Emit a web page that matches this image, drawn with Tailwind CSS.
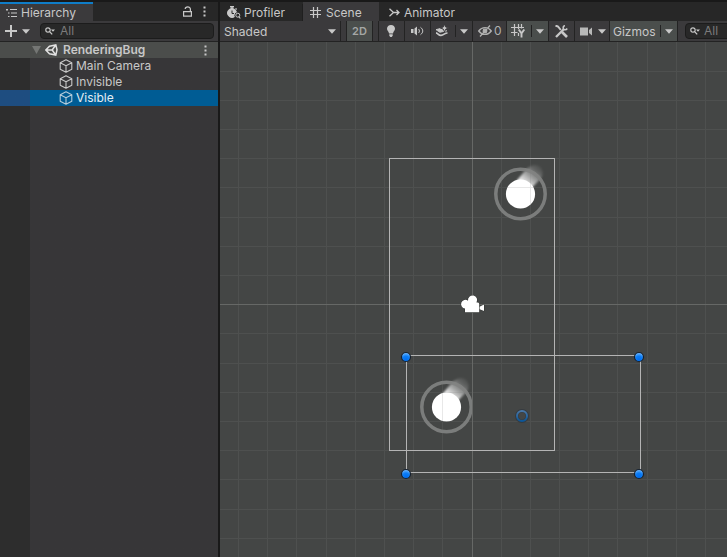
<!DOCTYPE html>
<html lang="en">
<head>
<meta charset="utf-8">
<title>RenderingBug</title>
<script src="https://cdn.jsdelivr.net/npm/@tailwindcss/browser@4"></script>
</head>
<body class="flex h-screen overflow-hidden border-t-2 border-[#191919] bg-[#191919] font-['Inter','Liberation_Sans',sans-serif] text-xs text-[#c8c8c8]">
<svg class="hidden">
  <symbol id="cube" viewBox="0 0 14 14"><path d="M7 .8 12.8 3.8V10.2L7 13.3 1.2 10.2V3.8ZM1.2 3.8 7 6.8 12.8 3.8M7 6.8V13.3" fill="none" stroke="currentColor" stroke-width="1.1" stroke-linejoin="round"/></symbol>
  <symbol id="down" viewBox="0 0 8 5"><path d="M0 .3H8L4 4.8Z" fill="currentColor"/></symbol>
  <symbol id="dots" viewBox="0 0 3 11"><path d="M.5 .5h2v2h-2zM.5 4.5h2v2h-2zM.5 8.5h2v2h-2z" fill="currentColor"/></symbol>
  <symbol id="search" viewBox="0 0 10 8"><circle cx="3" cy="3" r="2.2" fill="none" stroke="currentColor" stroke-width="1.2"/><path d="M4.6 4.6 7.2 7.4" stroke="currentColor" stroke-width="1.3"/><path d="M6 2.6H10L8 4.8Z" fill="currentColor"/></symbol>
</svg>

<aside class="flex w-[218px] shrink-0 flex-col bg-[#373638]">
  <div class="flex h-[19px] shrink-0 bg-[#272727]">
    <button class="flex h-full w-[93px] items-center gap-1 border-t-2 border-[#0f7dc8] bg-[#3b3a3c] pl-1.5">
      <svg class="h-[10px] w-[11px]" viewBox="0 0 11 10" stroke="currentColor" fill="none"><path d="M0 1.5H2M4 1.5H11M2 5H3.500M5 5H11M2 8.500H3.500M5 8.500H11M1 1V3"/></svg>
      Hierarchy
    </button>
    <div class="ml-auto flex items-center gap-[11px] pr-[12px]">
      <button aria-label="Lock"><svg class="block h-[11px] w-[9px]" viewBox="0 0 9 11" fill="none" stroke="currentColor" stroke-width="1.2"><path d="M.6 5.600H8.400V10.200H.6ZM7.400 5.600V3C7.400.200 2.200.200 2.200 3"/></svg></button>
      <button aria-label="Hierarchy menu"><svg class="block h-[11px] w-[3px]"><use href="#dots"/></svg></button>
    </div>
  </div>
  <div class="flex h-[21px] shrink-0 items-center border-b border-[#232323] bg-[#3b3a3c] pr-1 pl-[5px]">
    <button aria-label="Create" class="flex items-center gap-[5px]">
      <svg class="h-3 w-3" viewBox="0 0 12 12" stroke="currentColor" stroke-width="2"><path d="M6 0V12M0 6H12"/></svg>
      <svg class="h-[5px] w-2"><use href="#down"/></svg>
    </button>
    <label class="ml-[10px] flex h-4 min-w-0 flex-1 items-center gap-[5px] rounded border border-[#1c1c1c] bg-[#282828] pl-1">
      <svg class="h-2 w-2.5 shrink-0"><use href="#search"/></svg>
      <input aria-label="Search hierarchy" placeholder="All" class="w-full min-w-0 bg-transparent placeholder:text-[#7b7b7b] outline-none">
    </label>
  </div>
  <div class="flex h-4 shrink-0 items-center bg-[#4b4d4b] pr-[11px] pl-8 font-semibold">
    <svg class="h-2 w-[9px] text-[#747674]" viewBox="0 0 9 8"><path d="M0 0H9L4.500 8Z" fill="currentColor"/></svg>
    <svg class="mr-[5px] ml-1 h-3 w-[13px]" viewBox="0 0 13 12" fill="none" stroke="#e2e2e2" stroke-width="1.500"><path d="M4.500 2.200 10.800 .9 12 5.800 10.800 11.100 4.500 9.800 .8 6ZM7.200 6H.8M7.200 6 10.800 .9M7.200 6 10.800 11.100"/></svg>
    RenderingBug
    <button aria-label="Scene menu" class="ml-auto"><svg class="block h-[11px] w-[3px]"><use href="#dots"/></svg></button>
  </div>
  <div class="flex flex-1 flex-col bg-linear-to-r from-[#2d2d2d] from-[30px] to-[#373638] to-[30px]">
    <a href="#" class="flex h-4 items-center gap-[3px] pl-[59px]"><svg class="h-3.5 w-3.5"><use href="#cube"/></svg>Main Camera</a>
    <a href="#" class="flex h-4 items-center gap-[3px] pl-[59px]"><svg class="h-3.5 w-3.5"><use href="#cube"/></svg>Invisible</a>
    <a href="#" aria-current="true" class="flex h-4 items-center gap-[3px] bg-linear-to-r from-[#1e4d80] from-[30px] to-[#005c94] to-[30px] pl-[59px] text-[#e4eef4]"><svg class="h-3.5 w-3.5 text-[#b4ccda]"><use href="#cube"/></svg>Visible</a>
  </div>
</aside>

<main class="ml-0.5 flex min-w-0 flex-1 flex-col">
  <div class="flex h-[19px] shrink-0 bg-[#272727] pt-0.5">
    <button class="flex w-[83px] items-center gap-[3px] border-r border-[#1f1f1f] pl-[7px]">
      <svg class="h-[13px] w-[14px]" viewBox="0 0 14 13" fill="none" stroke="currentColor"><circle cx="5" cy="7" r="4.500" fill="currentColor"/><path d="M3 .7H7M5 1V3M8.500 2.500 9.600 3.500" stroke-width="1.500"/><path d="M5 4.500V7.500H7" stroke="#272727"/><circle cx="10.800" cy="9.500" r="2.900" fill="#272727" stroke="#272727"/><circle cx="10.800" cy="9.200" r="2"/><path d="M11.800 10.500 13.300 12.500" stroke-width="1.200"/></svg>
      Profiler
    </button>
    <button class="-mt-0.5 flex w-[76px] items-center gap-[5px] bg-[#3b3a3c] pt-0.5 pl-[7px]">
      <svg class="h-[11px] w-[11px]" viewBox="0 0 11 11" stroke="currentColor" stroke-width="1.200"><path d="M3.500 0V11M7.500 0V11M0 3.500H11M0 7.500H11"/></svg>
      Scene
    </button>
    <button class="flex items-center gap-1 pl-[10px]">
      <svg class="h-[10px] w-[11px]" viewBox="0 0 11 10" fill="none" stroke="currentColor" stroke-width="1.300"><path d="M.5 .8 4.500 4.500 .5 8.200M3.500 4.500H10M7.500 2 10 4.500 7.500 7"/></svg>
      Animator
    </button>
  </div>
  <div class="flex h-[21px] shrink-0 overflow-hidden border-b border-[#232323] bg-[#3b3a3c]">
    <label class="relative flex w-[121px] shrink-0 items-center border-r border-[#232323]">
      <select aria-label="Draw mode" class="h-full w-full appearance-none bg-transparent pt-px pl-1"><option>Shaded</option></select>
      <svg class="pointer-events-none absolute right-1 h-[5px] w-2"><use href="#down"/></svg>
    </label>
    <button class="ml-[5px] w-[27px] shrink-0 border-x border-[#232323] bg-[#4a4e4c] text-[11px] font-semibold text-[#a5a7a5]">2D</button>
    <button aria-label="Lighting" class="ml-[5px] flex w-[27px] shrink-0 items-center justify-center border-x border-[#232323] pr-0.5">
      <svg class="h-3 w-2" viewBox="0 0 8 12" fill="currentColor"><path d="M4 0C1.600 0 0 1.700 0 3.800 0 5.800 1.700 6.400 2 8.500H6C6.300 6.400 8 5.800 8 3.800 8 1.700 6.400 0 4 0ZM2.300 9.200H5.700V10.800L4.700 12H3.300L2.300 10.800Z"/></svg>
    </button>
    <button aria-label="Audio" class="flex w-[26px] shrink-0 items-center justify-center border-r border-[#232323]">
      <svg class="h-[10px] w-[13px]" viewBox="0 0 13 10" fill="none" stroke="currentColor"><path d="M0 3H2.500V7H0ZM3.500 2.500 6 .5V9.500L3.500 7.500Z" fill="currentColor" stroke="none"/><path d="M7.500 3C8.700 4 8.700 6 7.500 7M9.500 1.300C12.500 3.500 12.500 6.500 9.500 8.700"/></svg>
    </button>
    <button aria-label="Effects" class="flex w-[42px] shrink-0 items-center border-r border-[#232323] pl-1">
      <svg class="h-3 w-[14px]" viewBox="0 0 14 12" fill="none" stroke="currentColor"><path d="M5.500 3.500 1 4.700C2.500 5 2.500 6.500 5 7.200L12 5.800" fill="currentColor"/><path d="M1 7.800C3 8 3.500 10.500 6 10.300 9 10 9.500 8 12.500 8" stroke-width="1.700"/><path d="M9.500 -.8 10.600 2 13.800 3 10.800 4.100 9.500 7 8.300 4.100 5.400 3 8.400 2Z" fill="currentColor" stroke="#3b3a3c" stroke-width=".9"/></svg>
      <span class="ml-[6px] h-3 border-l border-[#232323]"></span>
      <svg class="ml-1 h-[5px] w-2"><use href="#down"/></svg>
    </button>
    <button aria-label="Hidden objects: 0" class="flex w-[34px] shrink-0 items-center gap-0.5 border-r border-[#232323] pl-[5px] text-[#b0b0b0]">
      <svg class="h-3 w-[14px]" viewBox="0 0 14 12" fill="none" stroke="currentColor" stroke-width="1.300"><path d="M.7 6C4 1.500 10 1.500 13.300 6 10 10.500 4 10.500 .7 6ZM2 11.500 12 .5"/><circle cx="7" cy="6" r="1.800" fill="currentColor"/></svg>0
    </button>
    <button aria-label="Grid" class="flex w-[42px] shrink-0 items-center border-r border-[#232323] bg-[#4a4e4c] pl-1">
      <svg class="h-[14px] w-[15px]" viewBox="0 0 15 14" fill="none" stroke="currentColor" stroke-width="1.200"><path d="M3.500 0V12M7.500 0V5M10.500 0V4.500M0 3.500H13M0 8.500H6.500M7.500 9V12"/><path d="M7.700 5.500 10.500 9.300 13.300 5.500M10.500 9V13.500" stroke-width="1.900"/></svg>
      <span class="ml-[5px] h-3 border-l border-[#232323]"></span>
      <svg class="ml-1 h-[5px] w-2"><use href="#down"/></svg>
    </button>
    <button aria-label="Tools" class="flex w-[26px] shrink-0 items-center justify-center border-r border-[#232323] pr-px">
      <svg class="h-[13px] w-[13px]" viewBox="0 0 13 13" fill="none" stroke="currentColor"><path d="M.5 .5 3 1.500 5.800 5" stroke-width="2"/><path d="M7 7 12 12" stroke-width="2.600"/><path d="M1 12 9 4" stroke-width="2.300"/><path d="M12.200 3.500C11 5.500 8 5 8.200 3 8.200 1.800 9 .8 10 .8" stroke-width="1.600"/></svg>
    </button>
    <button aria-label="Scene camera" class="flex w-[35px] shrink-0 items-center gap-[5px] border-r border-[#232323] pl-[5px]">
      <svg class="h-[9px] w-[13px]" viewBox="0 0 13 9" fill="#b8b8b8"><path d="M0 .5H8V8.500H0ZM9 3 12 .5V8.500L9 6Z"/></svg>
      <svg class="h-[5px] w-2"><use href="#down"/></svg>
    </button>
    <button class="flex w-[68px] shrink-0 items-center border-r border-[#232323] bg-[#4a4e4c] pl-[3px]">
      <span class="flex-1 pt-px text-left">Gizmos</span>
      <span class="h-3 border-l border-[#232323]"></span>
      <svg class="mx-1 h-[5px] w-2"><use href="#down"/></svg>
    </button>
    <label class="mt-0.5 ml-[7px] flex h-4 w-40 shrink-0 items-center gap-1 rounded border border-[#1c1c1c] bg-[#282828] pl-1">
      <svg class="h-2 w-2.5 shrink-0"><use href="#search"/></svg>
      <input aria-label="Search scene" placeholder="All" class="w-full min-w-0 bg-transparent placeholder:text-[#7b7b7b] outline-none">
    </label>
  </div>

  <div class="min-h-0 flex-1 bg-[#444645]">
    <svg class="block h-full w-full" viewBox="220 42 507 515" preserveAspectRatio="xMidYMid slice" fill="none">
      <defs>
        <radialGradient id="knob" cx=".5" cy=".8" r=".8"><stop offset="0" stop-color="#006df0"/><stop offset=".5" stop-color="#0c7df5"/><stop offset="1" stop-color="#7fc0ff"/></radialGradient>
        <linearGradient id="ring" x2="0" y2="1"><stop stop-color="#4a78a8"/><stop offset="1" stop-color="#0b5596"/></linearGradient>
        <linearGradient id="trail" gradientUnits="userSpaceOnUse" x1="5" y1="-10" x2="20" y2="-29"><stop stop-color="#fff" stop-opacity=".9"/><stop offset=".35" stop-color="#fff" stop-opacity=".5"/><stop offset=".7" stop-color="#fff" stop-opacity=".16"/><stop offset="1" stop-color="#fff" stop-opacity=".02"/></linearGradient>
        <filter id="soft" x="-20%" y="-20%" width="140%" height="140%"><feGaussianBlur stdDeviation=".8"/></filter>
        <g id="ball">
          <path d="M-4-13 5-24Q12-31 19-28 25-22 20-15L10-5Z" fill="url(#trail)" filter="url(#soft)"/>
          <circle r="24.700" stroke="#828382" stroke-opacity=".9" stroke-width="3.500"/>
          <circle r="14.600" fill="#fff"/>
        </g>
        <g id="handle"><circle r="4.500" fill="url(#knob)" stroke="#17212e" stroke-width="1.200"/></g>
      </defs>
      <use href="#ball" x="520.500" y="194"/>
      <use href="#ball" x="446.500" y="407"/>
      <path stroke="#808280" stroke-opacity=".18" shape-rendering="crispEdges" d="M238.500 42V557M267.500 42V557M296.500 42V557M326.500 42V557M355.500 42V557M384.500 42V557M413.500 42V557M442.500 42V557M501.500 42V557M530.500 42V557M559.500 42V557M588.500 42V557M617.500 42V557M647.500 42V557M676.500 42V557M705.500 42V557M220 71.500H727M220 100.500H727M220 129.500H727M220 158.500H727M220 187.500H727M220 217.500H727M220 246.500H727M220 275.500H727M220 333.500H727M220 363.500H727M220 392.500H727M220 421.500H727M220 450.500H727M220 479.500H727M220 509.500H727M220 538.500H727"/>
      <path stroke="#666866" shape-rendering="crispEdges" d="M472.500 42V557M220 304.500H727"/>
      <path stroke="#b4b4b4" shape-rendering="crispEdges" d="M389.500 158.500H554.500V450.500H389.500ZM406.500 355.500H640.500V472.500H406.500Z"/>
      <g fill="#fff" stroke="#333533" stroke-width="1" paint-order="stroke">
        <path d="M479 307 484 304.500V311L479 309Z"/>
        <path d="M465 308.400A4.300 4.300 0 1 1 468 300.700 4.600 4.600 0 1 1 476.500 302.500H478Q479.200 302.500 479.200 304V312.300H465Z"/>
      </g>
      <circle cx="522" cy="416" r="5.200" stroke="#353b40" stroke-width="3.600"/>
      <circle cx="522" cy="416" r="5" stroke="url(#ring)" stroke-width="2"/>
      <use href="#handle" x="406" y="357"/>
      <use href="#handle" x="639" y="357"/>
      <use href="#handle" x="406" y="474"/>
      <use href="#handle" x="639" y="474"/>
    </svg>
  </div>
</main>
</body>
</html>
